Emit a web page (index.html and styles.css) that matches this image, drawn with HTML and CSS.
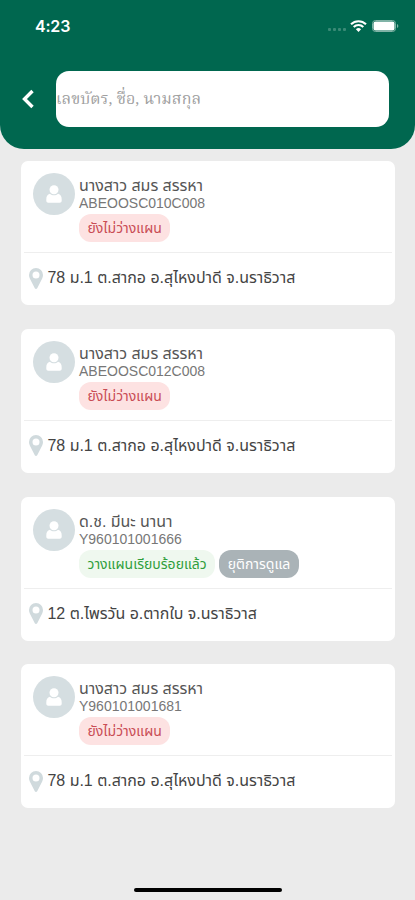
FILE: index.html
```
<!DOCTYPE html>
<html lang="th">
    <head>
        <meta charset="utf-8">
        <title>รายชื่อ</title>
        <link rel="stylesheet" href="styles.css">
    </head>
    <body>
        <svg class="symbols">
            <symbol id="user" viewBox="0 0 16 18">
                <circle cx="8" cy="4.8" r="4.5"/>
                <path d="M4 8.8C1.3 9.400.3 11.500.3 14.400v1.400c0 1.200.8 1.900 2 1.900h11.400c1.200 0 2-.7 2-1.900v-1.400c0-2.900-1-5-3.700-5.600-2.200 2-5.800 2-8 0z"/>
            </symbol>
            <symbol id="pin" viewBox="0 0 14 21">
                <path fill-rule="evenodd" d="M7 0a7 7 0 0 0-7 7c0 1.4.3 2.4.8 3.4l5 9.8c.5 1 1.9 1 2.4 0l5-9.8c.5-1 .8-2 .8-3.4a7 7 0 0 0-7-7zM7 3.500a3.500 3.500 0 1 1 0 7 3.500 3.500 0 0 1 0-7z"/>
            </symbol>
        </svg>
        <header class="header">
            <div class="status">
                <span class="time">4:23</span>
                <div class="status-icons">
                    <span class="signal"><i></i><i></i><i></i><i></i></span>
                    <svg class="wifi" width="17" height="12" viewBox="0 0 17 12">
                        <path d="M1 4.300a10.700 10.700 0 0 1 15 0M3.700 7a6.900 6.900 0 0 1 9.600 0" fill="none" stroke="#fff" stroke-width="2.100"/>
                        <path d="M5.900 9.300a3.800 3.800 0 0 1 5.200 0L8.500 12z" fill="#fff"/>
                    </svg>
                    <svg class="battery" width="27" height="12" viewBox="0 0 27 12">
                        <rect x=".5" y=".5" width="23" height="11" rx="3" fill="none" stroke="#80b3a6"/>
                        <rect x="1.5" y="1.5" width="21" height="9" rx="2" fill="#fff"/>
                        <path d="M25 4v4c1.800-.6 1.800-3.400 0-4z" fill="#80b3a6"/>
                    </svg>
                </div>
            </div>
            <div class="search">
                <svg class="back" width="12" height="20" viewBox="0 0 12 20">
                    <path d="M10.500 2L2.500 10l8 8" fill="none" stroke="#fff" stroke-width="3.400"/>
                </svg>
                <input type="text" class="search-input" placeholder="เลขบัตร, ชื่อ, นามสกุล">
            </div>
        </header>
        <main class="list">
            <div class="card">
                <div class="person">
                    <div class="avatar"><svg width="16" height="18"><use href="#user"/></svg></div>
                    <div class="info">
                        <span class="name">นางสาว สมร สรรหา</span>
                        <span class="code">ABEOOSC010C008</span>
                        <div class="badges"><span class="badge badge-red">ยังไม่ว่างแผน</span></div>
                    </div>
                </div>
                <div class="address">
                    <svg class="pin" width="14" height="21"><use href="#pin"/></svg>
                    <span>78 ม.1 ต.สากอ อ.สุไหงปาดี จ.นราธิวาส</span>
                </div>
            </div>
            <div class="card">
                <div class="person">
                    <div class="avatar"><svg width="16" height="18"><use href="#user"/></svg></div>
                    <div class="info">
                        <span class="name">นางสาว สมร สรรหา</span>
                        <span class="code">ABEOOSC012C008</span>
                        <div class="badges"><span class="badge badge-red">ยังไม่ว่างแผน</span></div>
                    </div>
                </div>
                <div class="address">
                    <svg class="pin" width="14" height="21"><use href="#pin"/></svg>
                    <span>78 ม.1 ต.สากอ อ.สุไหงปาดี จ.นราธิวาส</span>
                </div>
            </div>
            <div class="card">
                <div class="person">
                    <div class="avatar"><svg width="16" height="18"><use href="#user"/></svg></div>
                    <div class="info">
                        <span class="name">ด.ช. มีนะ นานา</span>
                        <span class="code">Y960101001666</span>
                        <div class="badges">
                            <span class="badge badge-green">วางแผนเรียบร้อยแล้ว</span>
                            <span class="badge badge-gray">ยุติการดูแล</span>
                        </div>
                    </div>
                </div>
                <div class="address">
                    <svg class="pin" width="14" height="21"><use href="#pin"/></svg>
                    <span>12 ต.ไพรวัน อ.ตากใบ จ.นราธิวาส</span>
                </div>
            </div>
            <div class="card">
                <div class="person">
                    <div class="avatar"><svg width="16" height="18"><use href="#user"/></svg></div>
                    <div class="info">
                        <span class="name">นางสาว สมร สรรหา</span>
                        <span class="code">Y960101001681</span>
                        <div class="badges"><span class="badge badge-red">ยังไม่ว่างแผน</span></div>
                    </div>
                </div>
                <div class="address">
                    <svg class="pin" width="14" height="21"><use href="#pin"/></svg>
                    <span>78 ม.1 ต.สากอ อ.สุไหงปาดี จ.นราธิวาส</span>
                </div>
            </div>
        </main>
        <div class="home-bar"></div>
    </body>
</html>
```
FILE: styles.css
```
* {
    box-sizing: border-box;
}

body {
    margin: 0;
    height: 900px;
    display: flex;
    flex-direction: column;
    background-color: #ebebeb;
    font-family: "Liberation Sans", "Noto Sans Thai", "Noto Sans", sans-serif;
    overflow: hidden;
}

.symbols {
    display: none;
}

.header {
    height: 149px;
    background-color: #00674f;
    border-radius: 0 0 24px 24px;
}

.status {
    height: 71px;
    padding: 16px 16px 0 35px;
    display: flex;
    justify-content: space-between;
    color: #fff;
}

.time {
    font-family: Inter, sans-serif;
    font-size: 16px;
    font-weight: 600;
    line-height: 20px;
    letter-spacing: -0.2px;
}

.status-icons {
    height: 19px;
    display: flex;
    align-items: center;
}

.signal {
    display: flex;
    gap: 2px;
    margin: 8px 4px 0 0;
}

.signal i {
    width: 3px;
    height: 3px;
    border-radius: 1px;
    background-color: #3a8a76;
}

.battery {
    margin-left: 5px;
}

.search {
    display: flex;
    align-items: center;
    padding: 0 26px 0 22px;
}

.search-input {
    flex: 1;
    height: 56px;
    margin-left: 22px;
    padding: 0;
    border: none;
    border-radius: 13px;
    background-color: #fff;
    font-family: "Liberation Serif", "Noto Serif Thai", serif;
    font-size: 16px;
    letter-spacing: 0.05px;
}

.search-input::placeholder {
    color: #a0a0a0;
}

.list {
    padding: 12px 20px 0 21px;
    display: flex;
    flex-direction: column;
    gap: 23.8px;
}

.card {
    height: 144px;
    background-color: #fff;
    border-radius: 7px;
    padding: 0 3px;
}

.person {
    height: 92px;
    display: flex;
    gap: 4px;
    padding: 12px 0 0 9px;
    border-bottom: 1px solid #eeeeee;
}

.avatar {
    width: 42px;
    height: 42px;
    border-radius: 50%;
    background-color: #d5dee1;
    display: flex;
    align-items: center;
    justify-content: center;
}

.avatar svg {
    fill: #fff;
}

.info {
    display: flex;
    flex-direction: column;
    align-items: flex-start;
    padding-top: 4px;
    white-space: nowrap;
}

.name {
    font-size: 16px;
    line-height: 18px;
    letter-spacing: -0.05px;
    color: #555;
}

.code {
    font-size: 14px;
    line-height: 17px;
    color: #777;
}

.badges {
    display: flex;
    gap: 4px;
    margin-top: 2px;
}

.badge {
    height: 28px;
    padding: 0 8.5px;
    border-radius: 12px;
    font-size: 14px;
    line-height: 28px;
}

.badge-red {
    background-color: #fde2e2;
    color: #c94d55;
}

.badge-green {
    background-color: #eff8ef;
    color: #2f9e3c;
}

.badge-gray {
    background-color: #aab3b7;
    color: #fff;
}

.address {
    height: 50px;
    display: flex;
    align-items: center;
    padding-left: 5px;
    gap: 4.5px;
    font-size: 16px;
    letter-spacing: -0.03px;
    color: #444;
    white-space: nowrap;
}

.pin {
    fill: #d0dadd;
}

.home-bar {
    width: 148px;
    height: 4px;
    margin: auto auto 8px;
    border-radius: 2px;
    background-color: #000;
}
```
